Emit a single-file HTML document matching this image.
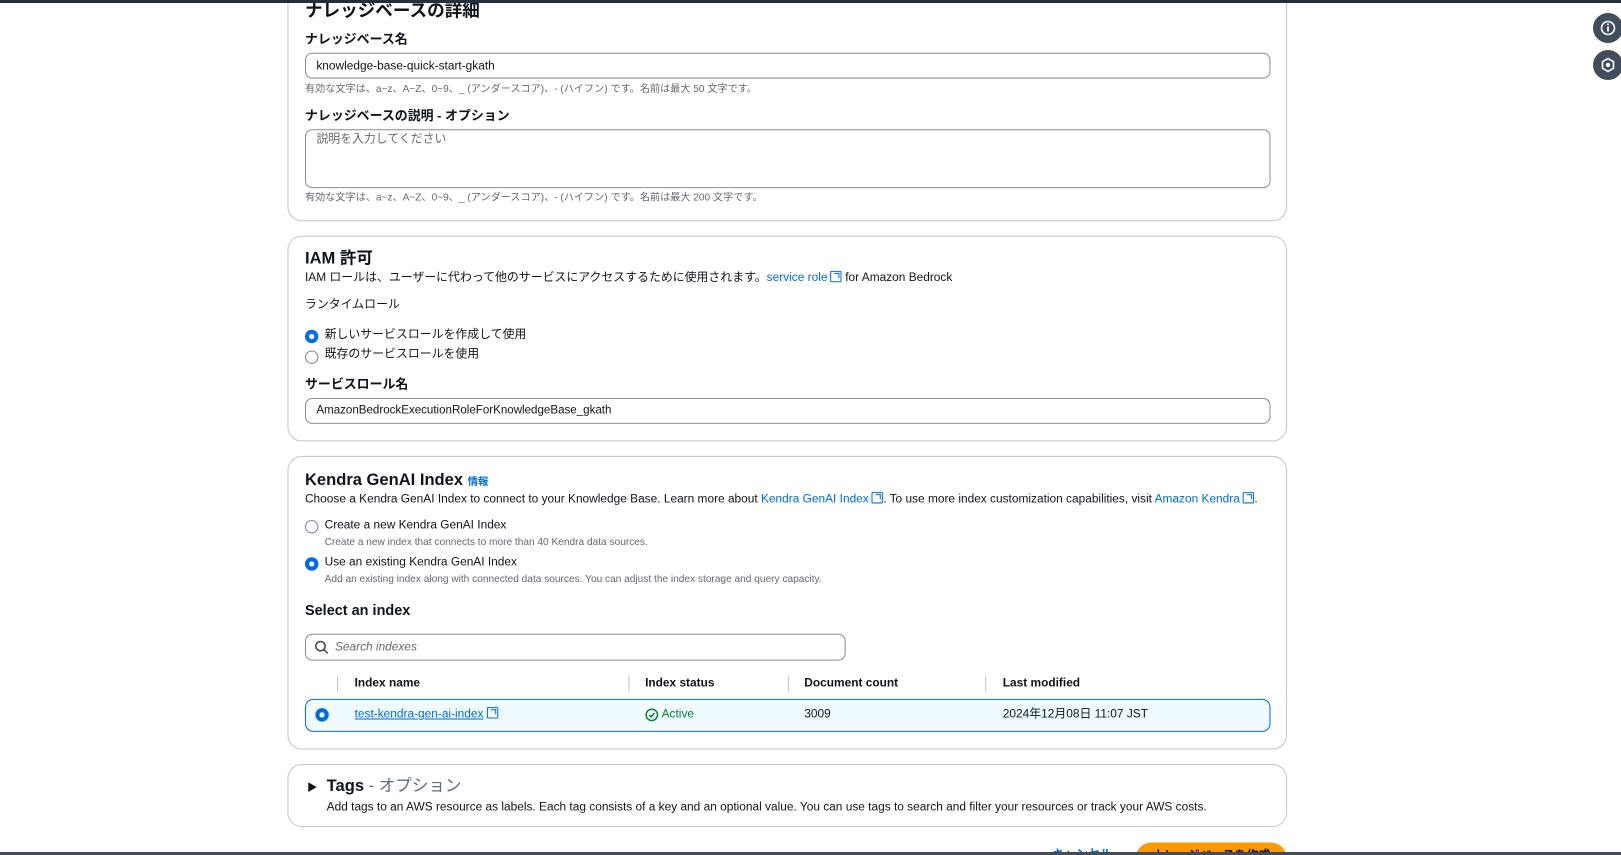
<!DOCTYPE html>
<html style="width:1621px;height:855px;overflow:hidden"><head><meta charset="utf-8"><style>
*{box-sizing:border-box;margin:0;padding:0}
html,body{width:1621px;height:855px;overflow:hidden}
body{background:#fff;position:relative;font-family:"Liberation Sans","Noto Sans CJK JP",sans-serif;color:#0f141a;font-size:11.5px}
#clip{position:absolute;left:0;top:0;width:1621px;height:855px;overflow:hidden}
#w{position:absolute;left:0;top:0;width:1568px;height:827px;transform:scale(1.0338);transform-origin:0 0}
.a{position:absolute;white-space:nowrap;line-height:15px}
.card{position:absolute;left:278px;width:967px;border:1px solid #c6c6cd;border-radius:14px;background:#fff}
.in{position:absolute;left:295px;width:934px;border:1px solid #8c8c94;border-radius:7px;background:#fff}
.h{font-weight:bold;font-size:12.5px}
.h2{font-weight:bold;font-size:16px;line-height:19px}
.hint{font-size:9.8px;color:#656871}
.lnk{color:#006ce0}
.r{position:absolute;width:13px;height:13px;border-radius:50%;border:1.5px solid #7d8998;background:#fff}
.rs{border:4px solid #006ce0}
.ext{display:inline-block;width:11px;height:11px;border:1.5px solid #006ce0;border-radius:1px;vertical-align:-1px;margin-left:3px;position:relative}
.ext:after{content:"";position:absolute;right:1px;top:1px;width:4px;height:4px;border-top:1.5px solid #006ce0;border-right:1.5px solid #006ce0}
.sep{position:absolute;top:653px;width:1px;height:16px;background:#c6c6cd}
</style></head><body>
<div id="clip">
<div id="w">
<div class="card" style="top:-20px;height:234px"></div>
<div class="a h2" style="left:295px;top:1px;font-size:17px">ナレッジベースの詳細</div>
<div class="a h" style="left:295px;top:31px">ナレッジベース名</div>
<div class="in" style="top:51px;height:25px"></div>
<div class="a" style="left:306px;top:57px">knowledge-base-quick-start-gkath</div>
<div class="a hint" style="left:295px;top:79px">有効な文字は、a~z、A~Z、0~9、_ (アンダースコア)、- (ハイフン) です。名前は最大 50 文字です。</div>
<div class="a h" style="left:295px;top:105px">ナレッジベースの説明 - オプション</div>
<div class="in" style="top:125px;height:57px"></div>
<div class="a" style="left:306px;top:128px;color:#656871">説明を入力してください</div>
<div class="a hint" style="left:295px;top:184px">有効な文字は、a~z、A~Z、0~9、_ (アンダースコア)、- (ハイフン) です。名前は最大 200 文字です。</div>

<div class="card" style="top:228px;height:199px"></div>
<div class="a h2" style="left:295px;top:241px">IAM 許可</div>
<div class="a" style="left:295px;top:262px">IAM ロールは、ユーザーに代わって他のサービスにアクセスするために使用されます。<span class="lnk">service role<span class="ext"></span></span> for Amazon Bedrock</div>
<div class="a" style="left:295px;top:288px">ランタイムロール</div>
<div class="r rs" style="left:295px;top:319px"></div>
<div class="a" style="left:314px;top:317px">新しいサービスロールを作成して使用</div>
<div class="r" style="left:295px;top:339px"></div>
<div class="a" style="left:314px;top:336px">既存のサービスロールを使用</div>
<div class="a h" style="left:295px;top:365px">サービスロール名</div>
<div class="in" style="top:385px;height:25px"></div>
<div class="a" style="left:306px;top:390px;font-size:11.2px">AmazonBedrockExecutionRoleForKnowledgeBase_gkath</div>

<div class="card" style="top:441px;height:284px"></div>
<div class="a h2" style="left:295px;top:455px">Kendra GenAI Index <span class="lnk" style="font-size:10px">情報</span></div>
<div class="a" style="left:295px;top:476px">Choose a Kendra GenAI Index to connect to your Knowledge Base. Learn more about <span class="lnk">Kendra GenAI Index<span class="ext"></span></span>. To use more index customization capabilities, visit <span class="lnk">Amazon Kendra<span class="ext"></span></span>.</div>
<div class="r" style="left:295px;top:503px"></div>
<div class="a" style="left:314px;top:501px">Create a new Kendra GenAI Index</div>
<div class="a hint" style="left:314px;top:517px">Create a new index that connects to more than 40 Kendra data sources.</div>
<div class="r rs" style="left:295px;top:539px"></div>
<div class="a" style="left:314px;top:537px">Use an existing Kendra GenAI Index</div>
<div class="a hint" style="left:314px;top:553px">Add an existing index along with connected data sources. You can adjust the index storage and query capacity.</div>
<div class="a" style="left:295px;top:583px;font-weight:bold;font-size:14px">Select an index</div>
<div class="in" style="top:613px;height:26px;width:523px"></div>
<svg class="a" style="left:304px;top:619px" width="14" height="14"><circle cx="6" cy="6" r="4.5" fill="none" stroke="#424650" stroke-width="1.5"/><line x1="9.5" y1="9.5" x2="13" y2="13" stroke="#424650" stroke-width="1.5"/></svg>
<div class="a" style="left:324px;top:619px;font-style:italic;color:#656871;font-size:11.5px">Search indexes</div>
<div class="sep" style="left:326px"></div><div class="sep" style="left:608px"></div><div class="sep" style="left:762px"></div><div class="sep" style="left:953px"></div>
<div class="a h" style="left:343px;top:654px;font-size:11.5px">Index name</div>
<div class="a h" style="left:624px;top:654px;font-size:11.5px">Index status</div>
<div class="a h" style="left:778px;top:654px;font-size:11.5px">Document count</div>
<div class="a h" style="left:970px;top:654px;font-size:11.5px">Last modified</div>
<div class="a" style="left:295px;top:676px;width:934px;height:32px;border:1px solid #006ce0;border-radius:8px;background:#f0fbff"></div>
<div class="r rs" style="left:305px;top:685px"></div>
<div class="a lnk" style="left:343px;top:684px;text-decoration:underline">test-kendra-gen-ai-index<span class="ext"></span></div>
<svg class="a" style="left:624px;top:685px" width="13" height="13"><circle cx="6.5" cy="6.5" r="5.5" fill="none" stroke="#00802f" stroke-width="1.4"/><path d="M4 6.7 L5.8 8.4 L9 4.8" fill="none" stroke="#00802f" stroke-width="1.4"/></svg>
<div class="a" style="left:640px;top:684px;color:#00802f">Active</div>
<div class="a" style="left:778px;top:684px">3009</div>
<div class="a" style="left:970px;top:684px;height:15px">2024年12月08日 11:07 JST</div>

<div class="card" style="top:739px;height:61px"></div>
<div class="a" style="left:297px;top:755px;font-size:10px">▶</div>
<div class="a" style="left:316px;top:751px;font-size:16px;line-height:19px"><b>Tags</b> <span style="color:#5f6b7a">- オプション</span></div>
<div class="a" style="left:316px;top:774px">Add tags to an AWS resource as labels. Each tag consists of a key and an optional value. You can use tags to search and filter your resources or track your AWS costs.</div>

<div class="a lnk" style="left:1018px;top:820px;font-weight:bold">キャンセル</div>
<div class="a" style="left:1098px;top:815px;width:147px;height:18px;border-radius:16px 16px 0 0;background:#ff9900;font-weight:bold;text-align:center;padding-top:6px;overflow:hidden">ナレッジベースを作成</div>
</div>
<div class="a" style="left:0;top:0;width:1621px;height:3px;background:#232f3e;z-index:5"></div>
<div class="a" style="left:0;top:852px;width:1621px;height:3px;background:#414d5c;z-index:5"></div>
<div class="a" style="left:1593px;top:13px;width:30px;height:30px;border-radius:50%;background:#414d5c;z-index:5"><svg width="30" height="30"><circle cx="15" cy="15" r="6.5" fill="none" stroke="#fff" stroke-width="1.6"/><line x1="15" y1="13.5" x2="15" y2="18.5" stroke="#fff" stroke-width="1.8"/><circle cx="15" cy="11.3" r="1" fill="#fff"/></svg></div>
<div class="a" style="left:1593px;top:50px;width:30px;height:30px;border-radius:50%;background:#414d5c;z-index:5"><svg width="30" height="30"><polygon points="15,8.5 20.5,11.7 20.5,18.3 15,21.5 9.5,18.3 9.5,11.7" fill="none" stroke="#fff" stroke-width="1.6"/><circle cx="15" cy="15" r="2.2" fill="#fff"/></svg></div>
</div>
</body></html>
